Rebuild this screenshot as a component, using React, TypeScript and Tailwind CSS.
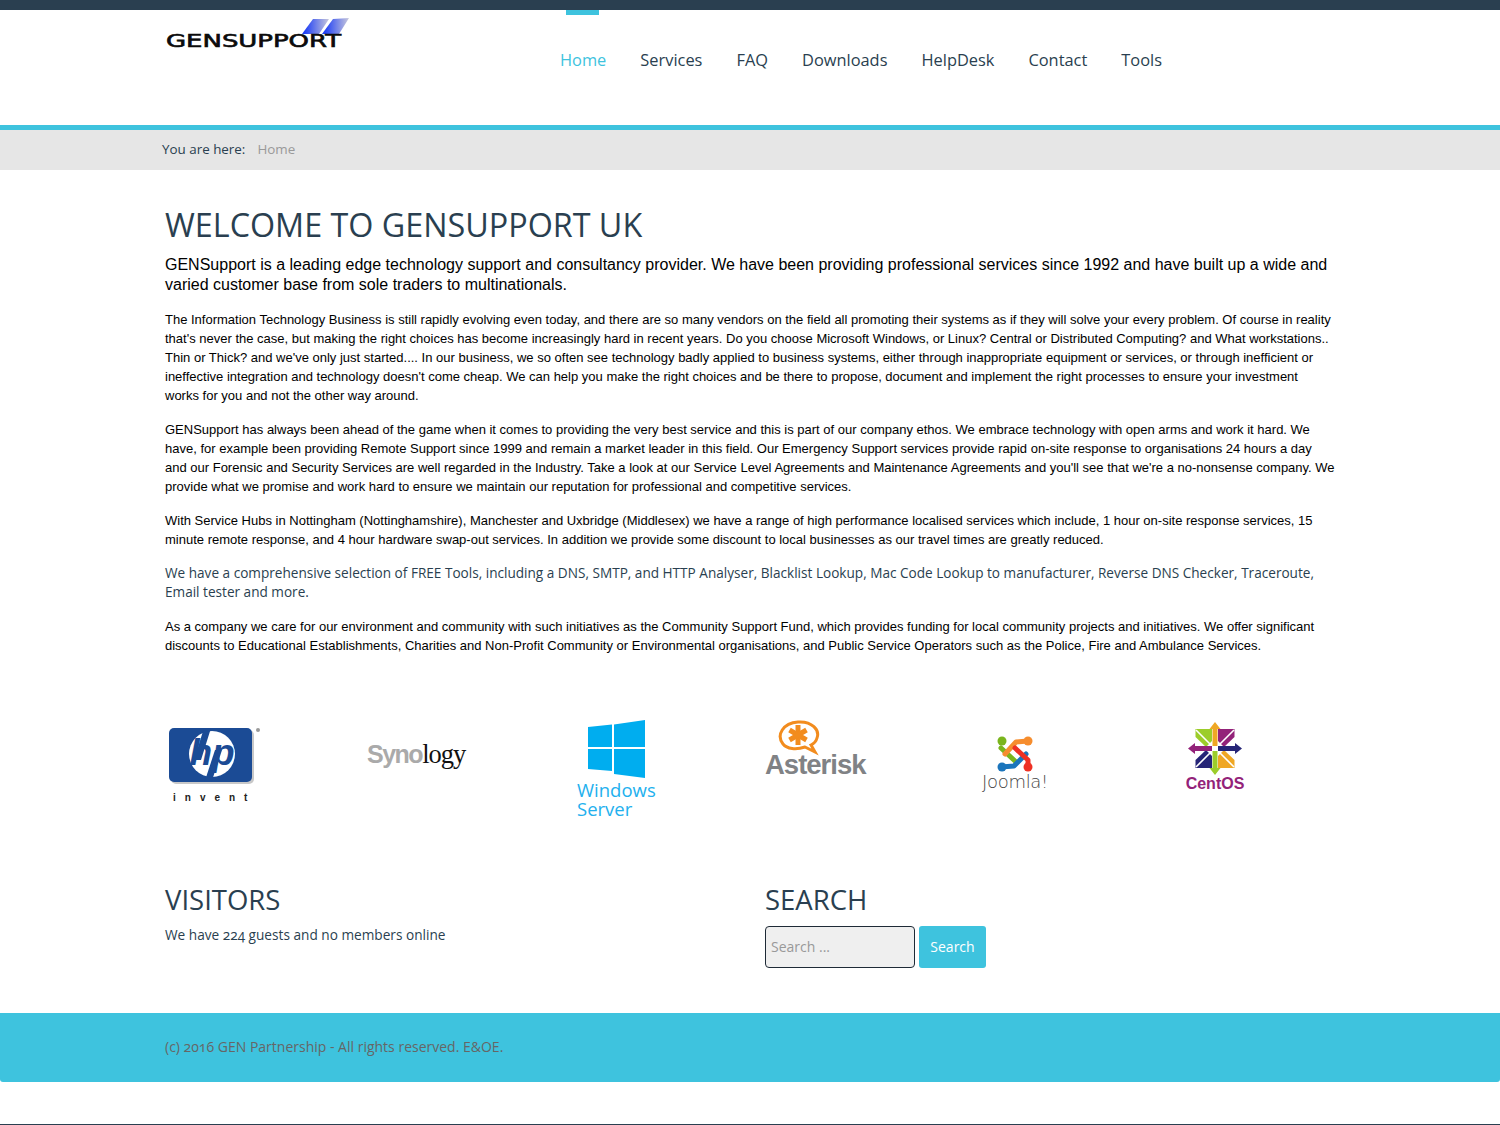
const navItems = ["Home", "Services", "FAQ", "Downloads", "HelpDesk", "Contact", "Tools"];

function GenLogo() {
  return (
    <svg width="190" height="40" viewBox="0 0 190 40" className="block">
      <defs>
        <linearGradient id="gl" x1="0" y1="0" x2="1" y2="0">
          <stop offset="0.1" stopColor="#1f3ff5" />
          <stop offset="1" stopColor="#c8c8dc" />
        </linearGradient>
      </defs>
      <polygon points="137,18 148,3 164,3 154,18" fill="url(#gl)" />
      <polygon points="157,18 168,3 184,2 174,18" fill="url(#gl)" />
      <text x="1" y="31" fontFamily="'DejaVu Sans', sans-serif" fontSize="17" stroke="#0b0b0b" strokeWidth="0.6" textLength="175" lengthAdjust="spacingAndGlyphs" fill="#0b0b0b">
        GENSUPPORT
      </text>
    </svg>
  );
}

function HpLogo() {
  return (
    <svg width="100" height="90" viewBox="0 0 100 90" className="block">
      <rect x="6" y="10" width="83" height="54" rx="5" fill="#c8c8c8" />
      <rect x="4" y="8" width="83" height="54" rx="5" fill="#1b4b95" />
      <circle cx="47" cy="34" r="23" fill="#fff" />
      <polygon points="39,8 46,8 36,40 29,40" fill="#1b4b95" />
      <polygon points="50,30 57,30 46.5,62 39.5,62" fill="#1b4b95" />
      <text x="47" y="45" textAnchor="middle" fontFamily="'Liberation Sans', sans-serif" fontWeight="700" fontStyle="italic" fontSize="37" fill="#1b4b95">
        hp
      </text>
      <circle cx="93" cy="10" r="2" fill="#9a9a9a" />
      <text x="8" y="81" fontFamily="'Liberation Sans', sans-serif" fontWeight="700" fontSize="10" letterSpacing="9" fill="#222">
        invent
      </text>
    </svg>
  );
}

function SynologyLogo() {
  return (
    <div className="flex h-[68px] items-center pl-[2px] leading-none">
      <span className="font-['Liberation_Sans'] text-[25px] font-bold tracking-[-1.5px] text-[#aaaaaa]">Syno</span>
      <span className="font-['Liberation_Serif'] text-[26.5px] tracking-[-1px] text-[#111]">logy</span>
    </div>
  );
}

function WindowsLogo() {
  return (
    <div className="w-[100px]">
      <svg width="100" height="60" viewBox="0 0 100 60" className="block">
        <g fill="#00adef">
          <polygon points="23,7 47,4.5 47,27 23,27" />
          <polygon points="49,4.5 80,0 80,27 49,27" />
          <polygon points="23,29 47,29 47,51 23,49" />
          <polygon points="49,29 80,29 80,58 49,54" />
        </g>
      </svg>
      <div className="pl-[12px] font-['Open_Sans'] text-[18.5px] leading-[19px] text-[#22b0ee]">
        <div>Windows</div>
        <div>Server</div>
      </div>
    </div>
  );
}

function AsteriskLogo() {
  return (
    <div className="w-[110px]">
      <svg width="110" height="36" viewBox="0 0 110 36" className="block">
        <path d="M18 24 C11 15 18 3 33 2 C47 1 55 10 52 18 C51 22 48 24 46 25 L50 32 L40 27 C31 30 22 29 18 24 Z" fill="none" stroke="#f28c1e" strokeWidth="3" />
        <g stroke="#f28c1e" strokeWidth="5">
          <path d="M33 5 V25" />
          <path d="M24.5 10 L41.5 20" />
          <path d="M41.5 10 L24.5 20" />
        </g>
      </svg>
      <div className="-mt-[4px] font-['Liberation_Sans'] text-[27.5px] font-bold leading-[26px] tracking-[-1px] text-[#808285]">
        Asterisk
      </div>
    </div>
  );
}

function JoomlaLogo() {
  return (
    <div className="w-[110px] pl-[17px] pt-[16px]">
      <svg width="36" height="36" viewBox="0 0 36 36" className="ml-[15px] block">
        <g fill="none" strokeWidth="5" strokeLinecap="round" strokeLinejoin="round">
          <path d="M4 12 L18 25" stroke="#7ab51d" />
          <path d="M31 5 L19 6 L8 18" stroke="#f68d2e" />
          <path d="M4 31 L17 30 L29 18" stroke="#1b75bc" />
          <path d="M31 31 L31 24 L18 12" stroke="#ee3124" />
        </g>
        <circle cx="5" cy="5" r="4.5" fill="#7ab51d" />
        <circle cx="31" cy="5" r="4.5" fill="#f68d2e" />
        <circle cx="5" cy="31" r="4.5" fill="#1b75bc" />
        <circle cx="31" cy="31" r="4.5" fill="#ee3124" />
      </svg>
      <div className="mt-[2px] whitespace-nowrap font-['DejaVu_Sans'] text-[18px] font-extralight leading-[16px] tracking-[-0.3px] text-[#444]">Joomla!</div>
    </div>
  );
}

function CentosLogo() {
  return (
    <div className="w-[110px] pl-[20px]">
      <svg width="60" height="57" viewBox="0 0 60 57" className="block">
        <polygon points="10.5,9 27,9 27,21 21,27 10.5,17" fill="#9ccd2a" />
        <polygon points="33,9 49.5,9 49.5,17 39,27 33,21" fill="#932279" />
        <polygon points="10.5,48 27,48 27,36 21,30 10.5,40" fill="#262577" />
        <polygon points="49.5,48 33,48 33,36 39,30 49.5,40" fill="#efa724" />
        <path d="M11 10 L27 26 M49 10 L33 26 M11 47 L27 31 M49 47 L33 31" stroke="#fff" strokeWidth="1.6" />
        <polygon points="30,2 35.5,9 32.5,9 32.5,26 27.5,26 27.5,9 24.5,9" fill="#efa724" />
        <polygon points="57,28.5 50,34 50,31 33,31 33,26 50,26 50,23" fill="#262577" />
        <polygon points="30,55 24.5,48 27.5,48 27.5,31 32.5,31 32.5,48 35.5,48" fill="#9ccd2a" />
        <polygon points="3,28.5 10,23 10,26 27,26 27,31 10,31 10,34" fill="#932279" />
      </svg>
      <div className="-mt-[1px] w-[60px] text-center font-['Liberation_Sans'] text-[16px] font-bold leading-[15px] text-[#932279]">
        CentOS
      </div>
    </div>
  );
}

export default function App() {
  return (
    <div className="min-h-[1125px] border-b border-[#2a3f50] bg-white font-['Open_Sans',sans-serif] text-[#2a3f50]">
      <div className="h-[10px] bg-[#2a3f50]" />

      <header className="h-[120px] border-b-[5px] border-[#3ec3de]">
        <div className="flex pl-[165px]">
          <div className="w-[395px] pt-[6px]">
            <GenLogo />
          </div>
          <nav className="flex gap-[34px] text-[16.4px]">
            {navItems.map((item, i) => (
              <a
                key={item}
                className={
                  i === 0
                    ? "relative block pt-[38px] text-[#3ec3de]"
                    : "block pt-[38px] text-[#2a3f50]"
                }
              >
                {i === 0 && <span className="absolute left-[6px] top-0 h-[5px] w-[33px] bg-[#3ec3de]" />}
                {item}
              </a>
            ))}
          </nav>
        </div>
      </header>

      <div className="flex h-[40px] items-center bg-[#e6e6e6] pb-[2px] pl-[162px] text-[13.4px]">
        <span>You are here:</span>
        <span className="ml-[12px] text-[#999]">Home</span>
      </div>

      <main className="ml-[165px] w-[1170px]">
        <h1 className="mt-[31px] text-[32.3px] font-normal leading-[46px]">WELCOME TO GENSUPPORT UK</h1>

        <div className="font-['Liberation_Sans',sans-serif] text-black">
          <p className="mt-[8px] text-[16px] leading-[20px]">
            GENSupport is a leading edge technology support and consultancy provider. We have been providing professional services since 1992 and have built up a wide and varied customer base from sole traders to multinationals.
          </p>
          <p className="mt-[15px] text-[13px] leading-[19px]">
            The Information Technology Business is still rapidly evolving even today, and there are so many vendors on the field all promoting their systems as if they will solve your every problem. Of course in reality that's never the case, but making the right choices has become increasingly hard in recent years. Do you choose Microsoft Windows, or Linux? Central or Distributed Computing? and What workstations.. Thin or Thick? and we've only just started.... In our business, we so often see technology badly applied to business systems, either through inappropriate equipment or services, or through inefficient or ineffective integration and technology doesn't come cheap. We can help you make the right choices and be there to propose, document and implement the right processes to ensure your investment works for you and not the other way around.
          </p>
          <p className="mt-[15px] text-[13px] leading-[19px]">
            GENSupport has always been ahead of the game when it comes to providing the very best service and this is part of our company ethos. We embrace technology with open arms and work it hard. We have, for example been providing Remote Support since 1999 and remain a market leader in this field. Our Emergency Support services provide rapid on-site response to organisations 24 hours a day and our Forensic and Security Services are well regarded in the Industry. Take a look at our Service Level Agreements and Maintenance Agreements and you'll see that we're a no-nonsense company. We provide what we promise and work hard to ensure we maintain our reputation for professional and competitive services.
          </p>
          <p className="mt-[15px] text-[13px] leading-[19px]">
            With Service Hubs in Nottingham (Nottinghamshire), Manchester and Uxbridge (Middlesex) we have a range of high performance localised services which include, 1 hour on-site response services, 15 minute remote response, and 4 hour hardware swap-out services. In addition we provide some discount to local businesses as our travel times are greatly reduced.
          </p>
        </div>

        <p className="mt-[14px] text-[13.6px] leading-[19px]">
          We have a comprehensive selection of FREE Tools, including a DNS, SMTP, and HTTP Analyser, Blacklist Lookup, Mac Code Lookup to manufacturer, Reverse DNS Checker, Traceroute, Email tester and more.
        </p>

        <p className="mt-[16px] font-['Liberation_Sans',sans-serif] text-[13px] leading-[19px] text-black">
          As a company we care for our environment and community with such initiatives as the Community Support Fund, which provides funding for local community projects and initiatives. We offer significant discounts to Educational Establishments, Charities and Non-Profit Community or Environmental organisations, and Public Service Operators such as the Police, Fire and Ambulance Services.
        </p>

        <div className="mt-[65px] grid h-[102px] w-[1200px] grid-cols-6">
          <HpLogo />
          <SynologyLogo />
          <WindowsLogo />
          <AsteriskLogo />
          <JoomlaLogo />
          <CentosLogo />
        </div>

        <div className="mt-[61px] grid w-[1200px] grid-cols-2">
          <section>
            <h3 className="text-[27.5px] font-normal leading-[34px]">VISITORS</h3>
            <p className="mt-[8px] text-[13.65px] leading-[20px] oldstyle-nums">We have 224 guests and no members online</p>
          </section>
          <section>
            <h3 className="text-[27.5px] font-normal leading-[34px]">SEARCH</h3>
            <div className="mt-[9px] flex gap-[4px]">
              <input
                placeholder="Search ..."
                className="h-[42px] w-[150px] rounded-[4px] border border-[#1e2a36] bg-[#efefef] px-[5px] pb-[2px] text-[14px] placeholder:text-[#999]"
              />
              <button className="h-[42px] w-[67px] rounded-[3px] bg-[#3ec3de] pb-[2px] text-[14px] text-white">Search</button>
            </div>
          </section>
        </div>
      </main>

      <footer className="mt-[45px] flex h-[69px] items-center rounded-b-[3px] bg-[#3ec3de] pb-[2px] pl-[165px] text-[14px] text-[#666] oldstyle-nums">
        (c) 2016 GEN Partnership - All rights reserved. E&amp;OE.
      </footer>
    </div>
  );
}
